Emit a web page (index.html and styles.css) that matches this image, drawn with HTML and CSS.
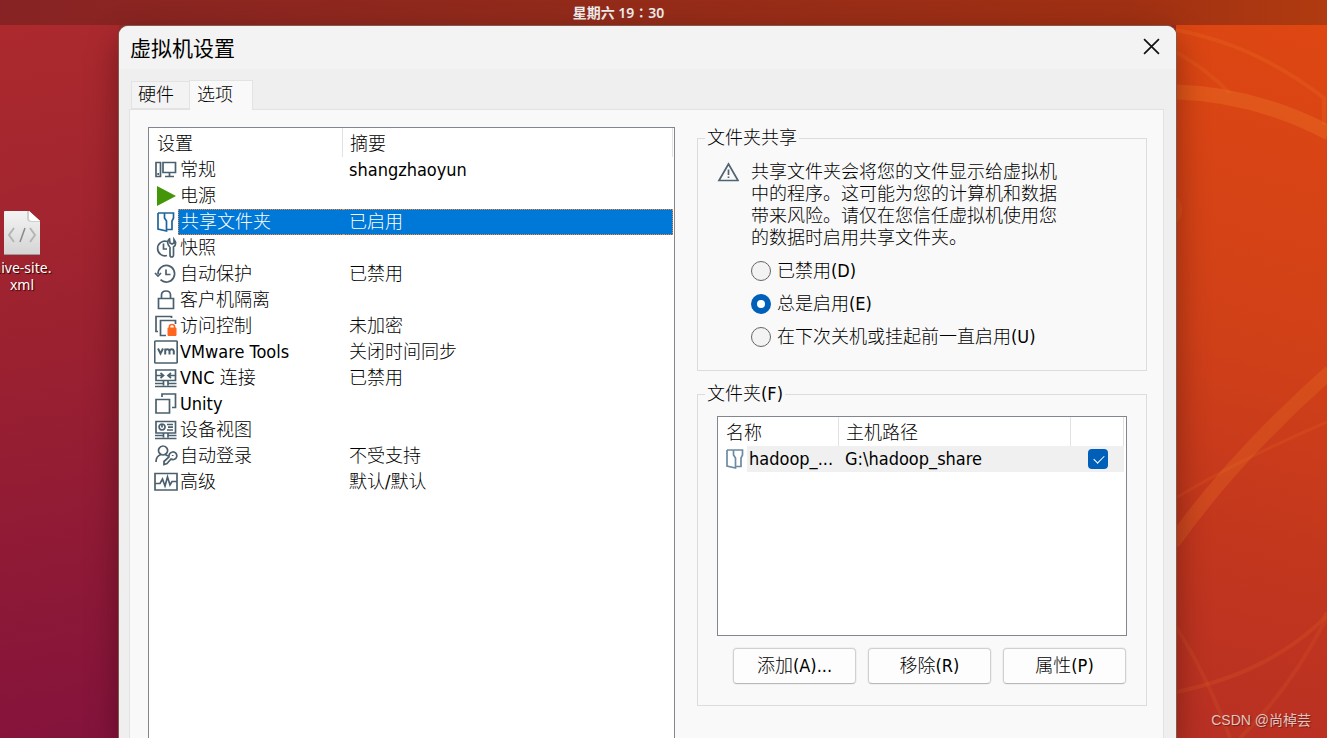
FILE: index.html
```
<!DOCTYPE html>
<html lang="zh-CN">
<head>
<meta charset="utf-8">
<title>虚拟机设置</title>
<link rel="stylesheet" href="styles.css">
</head>
<body>
<header class="topbar"><time class="clock">星期六 19∶30</time></header>
<main class="desktop">
  <aside class="side side-left">
    <figure class="file">
      <svg class="file-icon" viewBox="0 0 36 46" aria-hidden="true">
        <defs><linearGradient id="paper" x1="0" y1="0" x2="0" y2="1"><stop offset="0" stop-color="#f4f4f4"/><stop offset="1" stop-color="#d4d4d4"/></linearGradient></defs>
        <path d="M0 2Q0 1 1 1H25L36 11V44Q36 45 35 45H1Q0 45 0 44Z" fill="url(#paper)"/>
        <path d="M0 44.500H36" stroke="#9a9a9a"/>
        <path d="M23 1H25L36 11V12H27Q23 12 23 8Z" fill="#cfcfcf"/>
        <path d="M25 1L36 11H28Q25 11 25 8Z" fill="#fff"/>
        <path d="M10 18L5 25L10 32M26 18L31 25L26 32" fill="none" stroke="#b5b5b5" stroke-width="2"/>
        <path d="M21 18L16 32" stroke="#888" stroke-width="1.500"/>
      </svg>
      <figcaption class="file-name">hive-site.<br>xml</figcaption>
    </figure>
  </aside>

  <section class="dialog" aria-labelledby="dialog-title">
    <header class="titlebar">
      <h1 class="title" id="dialog-title">虚拟机设置</h1>
      <button class="close" type="button" aria-label="关闭"><svg viewBox="0 0 16 16" aria-hidden="true"><path d="M1 1L15 15M15 1L1 15" fill="none" stroke="#111" stroke-width="1.600"/></svg></button>
    </header>
    <nav class="tabs" role="tablist">
      <button class="tab" type="button" role="tab" aria-selected="false">硬件</button>
      <button class="tab tab-active" type="button" role="tab" aria-selected="true">选项</button>
    </nav>
    <div class="panel">
      <div class="list settings">
        <table class="grid">
          <colgroup><col class="col-icon"><col class="col-setting"><col></colgroup>
          <thead><tr><th colspan="2">设置</th><th>摘要</th></tr></thead>
          <tbody>
            <tr><td class="ico"><svg class="icon" viewBox="0 0 24 26"><path d="M2 5.500H6.500V19.500H2ZM9 5.500H21.500V15.500H9ZM15.500 15.500V19M11 19.500H20M4.200 16V18"/></svg></td><td>常规</td><td>shangzhaoyun</td></tr>
            <tr><td class="ico"><svg class="icon" viewBox="0 0 24 26"><path class="play" d="M3 3L22 13L3 23Z"/></svg></td><td>电源</td><td></td></tr>
            <tr class="selected"><td class="ico"><svg class="icon icon-blue" viewBox="0 0 24 26"><path d="M4 4H19.500V9L18 12V20.500H13M4 4V20L12.500 22V12L10.500 9V4"/></svg></td><td>共享文件夹</td><td>已启用</td></tr>
            <tr><td class="ico"><svg class="icon" viewBox="0 0 24 26"><path d="M13 6.500A7.300 7.300 0 1 0 13 20.500M9.500 8.500V14H13M16 12V20Q16 22 17.700 22T19.500 20V12Q22 10.500 21.500 7L20 4.500V8L18 9L16 8L15.500 4Q13 6 14 9Q14.500 11 16 12"/></svg></td><td>快照</td><td></td></tr>
            <tr><td class="ico"><svg class="icon" viewBox="0 0 24 26"><path d="M4 13A8.300 8.300 0 1 1 6.500 18.700M1 12L4 15L7 12M12 8.500V13.500H16.500"/></svg></td><td>自动保护</td><td>已禁用</td></tr>
            <tr><td class="ico"><svg class="icon" viewBox="0 0 24 26"><path d="M4.500 11.500H19.500V21.500H4.500ZM7.500 11V8Q7.500 4 12 4T16.500 8V11"/></svg></td><td>客户机隔离</td><td></td></tr>
            <tr><td class="ico"><svg class="icon" viewBox="0 0 24 26"><path d="M17.500 5V3.500H2V18.500H4M21.500 11V7.500H6.500V22.500H12"/><path class="lock" d="M14 15H22V22.500H14Z"/><path class="shackle" d="M15.500 15V13.500Q15.500 11.500 18 11.500T20.500 13.500V15"/></svg></td><td>访问控制</td><td>未加密</td></tr>
            <tr><td class="ico"><svg class="icon" viewBox="0 0 24 26"><rect x="0.700" y="2" width="22.500" height="22" rx="1"/><path class="bold" d="M4 9.500L6.500 14.500L9 9.500M11.200 15.500V9.500M11.200 12Q11.500 10.300 13.300 10.300T15.500 12V15.500M15.500 12Q16 10.300 17.700 10.300T19.800 12V15.500"/></svg></td><td>VMware Tools</td><td>关闭时间同步</td></tr>
            <tr><td class="ico"><svg class="icon" viewBox="0 0 24 26"><path d="M2 5H21.500V15.500H2ZM9.500 15.500V20.500M14 15.500V20.500M1 18.500H9M14 18.500H22.500M1 21.500H22.500M2 10.500H9M6.500 8L9.500 10.500L6.500 13M21.500 10.500H14.500M17 8L14 10.500L17 13"/></svg></td><td>VNC 连接</td><td>已禁用</td></tr>
            <tr><td class="ico"><svg class="icon" viewBox="0 0 24 26"><path d="M2 8.500H15.500V22H2ZM8 6V3H21.500V16.500H18"/></svg></td><td>Unity</td><td></td></tr>
            <tr><td class="ico"><svg class="icon" viewBox="0 0 24 26"><path d="M2 4.500H21.500V16H2ZM9.500 16V20.500M14 16V20.500M1 18.500H9M14 18.500H22.500M1 21.500H22.500M8 7A3 3 0 1 0 8.100 7M8 7V10.500M13 7.500H19M14 10.200H19M13 13H19"/></svg></td><td>设备视图</td><td></td></tr>
            <tr><td class="ico"><svg class="icon" viewBox="0 0 24 26"><path d="M9 3A4.500 4.500 0 1 0 9.100 3M2 19Q2 13 7 11.500M11 11.500L14 13M18.500 9A3.800 3.800 0 1 1 17 16L13 20.500L10 21.500V18.500L15 14Q14.500 10 18.500 9M18.700 12V13"/></svg></td><td>自动登录</td><td>不受支持</td></tr>
            <tr><td class="ico"><svg class="icon" viewBox="0 0 24 26"><path d="M1 4.500H23V21H1ZM1 14.500H6L8.500 10L11 17L13.500 8L16 16L18 12.500H23"/></svg></td><td>高级</td><td>默认/默认</td></tr>
          </tbody>
        </table>
      </div>

      <div class="details">
        <fieldset class="group">
          <legend>文件夹共享</legend>
          <div class="sharing">
            <svg class="warning" viewBox="0 0 22 22" aria-hidden="true"><path d="M11.500 3L21 19.500H2Z" fill="none" stroke="#526471" stroke-width="1.700"/><path d="M11.500 8.500V14M11.500 15.500V17" stroke="#526471" stroke-width="1.700"/></svg>
            <div class="sharing-body">
              <p class="notice">共享文件夹会将您的文件显示给虚拟机中的程序。这可能为您的计算机和数据带来风险。请仅在您信任虚拟机使用您的数据时启用共享文件夹。</p>
              <label class="option"><input class="radio" type="radio" name="share">已禁用(D)</label>
              <label class="option"><input class="radio" type="radio" name="share" checked>总是启用(E)</label>
              <label class="option"><input class="radio" type="radio" name="share">在下次关机或挂起前一直启用(U)</label>
            </div>
          </div>
        </fieldset>

        <fieldset class="group folders">
          <legend>文件夹(F)</legend>
          <div class="list folder-list">
            <table class="grid">
              <colgroup><col class="col-icon"><col class="col-name"><col><col class="col-check"></colgroup>
              <thead><tr><th colspan="2">名称</th><th>主机路径</th><th aria-label="已启用"></th></tr></thead>
              <tbody>
                <tr class="current"><td class="ico"><svg class="icon icon-pale" viewBox="0 0 24 26"><path d="M4 4H19.500V9L18 12V20.500H13M4 4V20L12.500 22V12L10.500 9V4"/></svg></td><td>hadoop_...</td><td>G:\hadoop_share</td><td><input class="check" type="checkbox" checked aria-label="hadoop_share"></td></tr>
              </tbody>
            </table>
          </div>
          <div class="actions">
            <button class="button" type="button">添加(A)...</button>
            <button class="button" type="button">移除(R)</button>
            <button class="button" type="button">属性(P)</button>
          </div>
        </fieldset>
      </div>
    </div>
  </section>

  <aside class="side side-right">
    <svg class="arcs" viewBox="0 0 151 713" preserveAspectRatio="none" aria-hidden="true">
      <g fill="none" stroke="#f07828">
        <path d="M0 5Q80 20 148 73V100" stroke-width="4" opacity=".2"/>
        <path d="M0 27Q30 44 54 68" stroke-width="4" opacity=".18"/>
        <path d="M0 67Q78 69 153 108" stroke-width="15" opacity=".33"/>
        <path d="M-3 518Q58 432 154 347" stroke-width="14" opacity=".26"/>
        <path d="M0 473Q60 436 151 397" stroke-width="3" opacity=".15"/>
        <path d="M0 667Q85 650 140 601Q148 595 151 587" stroke-width="4" opacity=".15"/>
        <path d="M0 602Q30 648 54 713M64 713Q115 663 151 592" stroke-width="4" opacity=".12"/>
      </g>
      <circle cx="-12" cy="185" r="18" fill="#f07828" opacity=".2"/>
    </svg>
    <span class="watermark">CSDN @尚棹芸</span>
  </aside>
</main>
</body>
</html>
```
FILE: styles.css
```
* { box-sizing: border-box; }

body {
  margin: 0;
  height: 100vh;
  display: flex;
  flex-direction: column;
  overflow: hidden;
  font: 300 18px/22px "DejaVu Sans Condensed", "Noto Sans CJK SC", sans-serif;
  color: #000;
}

button { font: inherit; color: inherit; }

.topbar {
  height: 25px;
  flex: none;
  display: flex;
  align-items: center;
  justify-content: center;
  padding-right: 90px;
  background: linear-gradient(to right, #872324, #932b1a 45%, #a03013 85%, #b03b10);
}

.clock {
  color: #eee;
  font-family: "Noto Sans", "Noto Sans CJK SC", sans-serif;
  font-size: 14px;
  font-weight: 600;
}

.desktop {
  flex: 1;
  min-height: 0;
  display: grid;
  grid-template-columns: 119px minmax(0, 1fr) 151px;
  background: #9c2a20;
}

.side-left { background: linear-gradient(170deg, #ac2a2e, #9b2130 45%, #84133c); }

.side-right {
  position: relative;
  display: flex;
  align-items: flex-end;
  justify-content: flex-end;
  padding: 0 16px 7px 0;
  background: linear-gradient(195deg, #de4712, #d04018 45%, #c3371d 70%, #b83024);
}

.arcs {
  position: absolute;
  inset: 0;
  width: 100%;
  height: 100%;
}

.watermark {
  position: relative;
  color: #e3c3be;
  font-family: "Liberation Sans", "Noto Sans CJK SC", sans-serif;
  font-size: 14px;
  font-weight: 400;
  text-shadow: 1px 1px 1px #742018;
}

.file {
  width: 44px;
  margin: 185px 0 0;
  display: flex;
  flex-direction: column;
  align-items: center;
  gap: 3px;
}

.file-icon { width: 36px; height: 46px; }

.file-name {
  color: #fff;
  font-family: "Noto Sans", sans-serif;
  font-size: 14px;
  font-weight: 400;
  line-height: 17px;
  text-align: center;
  white-space: nowrap;
  text-shadow: 1px 1px 1px #300;
}

.dialog {
  position: relative;
  z-index: 1;
  margin-top: 1px;
  display: flex;
  flex-direction: column;
  min-height: 0;
  background: #efefef;
  border-radius: 9px 9px 0 0;
  box-shadow: 0 0 0 1px #85584c, 0 12px 32px rgba(30, 0, 0, .4);
}

.titlebar {
  height: 43px;
  flex: none;
  display: flex;
  align-items: center;
  justify-content: space-between;
  padding: 0 16px 2px 11px;
  background: #f3f3f3;
  border-radius: 9px 9px 0 0;
}

.title {
  margin: 0;
  font-family: "Noto Sans CJK SC", sans-serif;
  font-size: 21px;
  font-weight: 400;
}

.close {
  width: 17px;
  height: 17px;
  padding: 0;
  border: 0;
  background: none;
}

.close svg { display: block; width: 17px; height: 17px; }

.tabs {
  display: flex;
  align-items: flex-end;
  padding: 11px 12px 0;
}

.tab {
  width: 58px;
  height: 28px;
  padding: 0 0 0 6px;
  border: 1px solid #e3e3e3;
  border-right: 0;
  background: #f3f3f3;
  text-align: left;
}

.tab-active {
  position: relative;
  width: 64px;
  height: 30px;
  margin-bottom: -1px;
  padding: 0 0 2px 7px;
  border-right: 1px solid #e3e3e3;
  border-bottom: 0;
  background: #f9f9f9;
}

.panel {
  flex: 1;
  min-height: 0;
  margin: 0 12px 0 10px;
  padding: 17px 16px 0 18px;
  display: grid;
  grid-template-columns: minmax(0, 527fr) minmax(0, 450fr);
  gap: 22px;
  border: 1px solid #e2e2e2;
  border-bottom: 0;
  background: #f9f9f9;
}

.list {
  border: 1px solid #82878f;
  background: #fff;
  overflow: hidden;
}

.settings { border-bottom: 0; padding-right: 1px; }

.grid {
  width: 100%;
  table-layout: fixed;
  border-collapse: separate;
  border-spacing: 0;
}

.grid th {
  height: 29px;
  padding: 3px 7px 0 8px;
  font-weight: inherit;
  text-align: left;
  border-right: 1px solid #e2e2e2;
}

.grid th + th { padding-left: 7px; }

.grid td {
  height: 26px;
  padding: 0 0 0 2px;
  white-space: nowrap;
}

.grid td:last-child { padding-left: 6px; }
.grid .ico { padding: 0 0 0 5px; }

.col-icon { width: 29px; }
.col-setting { width: 165px; }
.col-name { width: 92px; }
.col-check { width: 53px; }

.icon {
  display: block;
  width: 24px;
  height: 26px;
  fill: none;
  stroke: #4b606e;
  stroke-width: 1.7;
}

.icon-blue { stroke: #1f659b; }
.icon-pale { stroke: #6b8ba4; }
.play { fill: #449609; stroke: none; }
.lock { fill: #ff671f; stroke: #ff671f; stroke-width: 1; }
.shackle { stroke: #ff671f; }
.bold { stroke-width: 2; }

.selected td:not(.ico) {
  color: #fff;
  background: #0078d7;
  border-top: 1px dotted #ff8728;
  border-bottom: 1px dotted #ff8728;
}

.selected td:nth-child(2) { border-left: 1px dotted #ff8728; }
.selected td:last-child { border-right: 1px dotted #ff8728; }

.details { display: flex; flex-direction: column; gap: 12px; }

.group {
  min-width: 0;
  margin: 0;
  padding: 12px 19px 16px;
  border: 1px solid #dcdcdc;
}

.group legend { margin-left: -12px; padding: 0 2px; }

.sharing { display: flex; gap: 12px; }
.warning { width: 22px; height: 22px; flex: none; }
.notice { max-width: 306px; margin: 0 0 5px; }

.option {
  height: 33px;
  display: flex;
  align-items: center;
  gap: 6px;
  white-space: nowrap;
}

.radio, .check {
  appearance: none;
  width: 20px;
  height: 20px;
  flex: none;
  margin: 0;
}

.radio {
  border: 1px solid #666;
  border-radius: 50%;
  background: #f3f3f3;
}

.radio:checked { border: 6px solid #005fb8; background: #fff; }

.sharing-body { padding-bottom: 1px; }

.folders { padding: 11px 19px 21px; }

.folder-list { min-height: 220px; padding-right: 2px; }
.folder-list td:nth-child(3) { padding-left: 6px; }
.current td:not(.ico) { background: #f0f0f0; }
.grid .current td:last-child { padding-left: 17px; }

.check {
  display: block;
  border-radius: 4px;
  background: #005fb8;
  position: relative;
}

.check:checked::after {
  content: "";
  position: absolute;
  left: 6px;
  top: 6px;
  width: 9px;
  height: 5px;
  border: solid #fff;
  border-width: 0 0 1px 1px;
  transform: rotate(-45deg);
}

.actions {
  display: grid;
  grid-template-columns: repeat(3, 1fr);
  gap: 12px;
  padding: 12px 1px 0 16px;
}

.button {
  height: 36px;
  padding: 0;
  border: 1px solid #d0d0d0;
  border-bottom-color: #b8b8b8;
  border-radius: 4px;
  background: #fdfdfd;
  box-shadow: 0 0 0 1px #f0f0f0;
}
```
